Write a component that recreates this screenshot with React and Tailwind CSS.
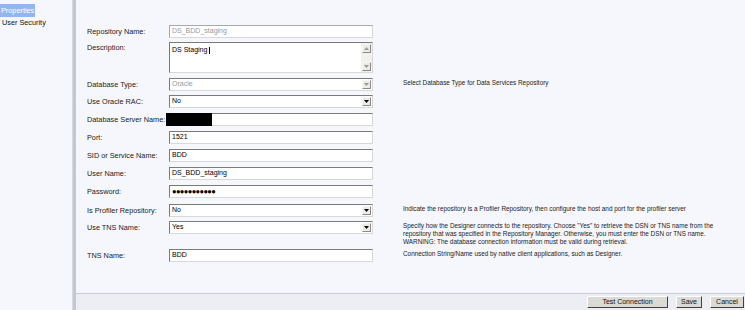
import React from "react";

const font = { fontFamily: '"Liberation Sans", Arial, sans-serif' };

function Box({ children, disabled, className = "" }) {
  return (
    <div
      className={`relative w-[204px] h-[13px] bg-white border border-t-[#7b7b7b] border-l-[#7b7b7b] border-r-[#d8d8d8] border-b-[#d8d8d8] flex items-center pl-[2px] text-[7px] ${disabled ? "text-[#9a9a9a]" : "text-black"} ${className}`}
    >
      {children}
    </div>
  );
}

function Arrow({ up, disabled }) {
  return (
    <div className="w-[9px] h-[9px] bg-[#ecebe6] border border-t-[#f6f6f6] border-l-[#f6f6f6] border-r-[#8a8a8a] border-b-[#8a8a8a] flex items-center justify-center">
      <svg width="5" height="3" viewBox="0 0 5 3">
        <path d={up ? "M0 3 L5 3 L2.5 0 Z" : "M0 0 L5 0 L2.5 3 Z"} fill={disabled ? "#9a9a9a" : "#000"} />
      </svg>
    </div>
  );
}

function Select({ value, disabled }) {
  return (
    <Box disabled={disabled}>
      <span className="flex-1">{value}</span>
      <div className="mr-[1px]">
        <Arrow disabled={disabled} />
      </div>
    </Box>
  );
}

function Row({ label, children, help, mt, labelPt = "pt-[2px]" }) {
  return (
    <div className="flex items-start" style={{ marginTop: mt }}>
      <div className={`w-[82px] shrink-0 text-[7.3px] text-[#222] ${labelPt}`}>{label}</div>
      <div className="shrink-0">{children}</div>
      {help && <div className="ml-[30px] h-[13px] text-[6.4px] leading-[8px] text-[#222] pt-[1px] w-[340px] whitespace-nowrap">{help}</div>}
    </div>
  );
}

export default function App() {
  return (
    <div className="w-[745px] h-[310px] bg-[#f6f7fd] flex overflow-hidden" style={font}>
      <div className="w-[72px] shrink-0 pt-[4px] text-[7.3px]">
        <div className="inline-block bg-[#93b6ee] text-white px-[1px] h-[13px] leading-[13px]">Properties</div>
        <div className="pl-[2px] mt-[1px] text-[#111]">User Security</div>
      </div>
      <div className="w-[4px] shrink-0 bg-[#c3c7cf] border-l border-[#d6d9df]" />
      <div className="flex-1 flex flex-col">
        <div className="flex-1 pl-[11px] pt-[25px]">
          <Row label="Repository Name:" mt={0}>
            <Box disabled className="border-t-[#a9a9a9] border-l-[#a9a9a9]">DS_BDD_staging</Box>
          </Row>
          <Row label="Description:" mt={4} labelPt="pt-[1px]">
            <div className="w-[204px] h-[31px] bg-white border border-t-[#7b7b7b] border-l-[#7b7b7b] border-r-[#d8d8d8] border-b-[#d8d8d8] flex text-[7px]">
              <div className="flex-1 pl-[2px] pt-[2px]">DS Staging <span className="inline-block w-[1px] h-[7px] bg-black align-middle" /></div>
              <div className="w-[11px] bg-[#f2f1ee] flex flex-col justify-between p-[1px]">
                <Arrow up disabled />
                <Arrow disabled />
              </div>
            </div>
          </Row>
          <Row label="Database Type:" mt={5} help="Select Database Type for Data Services Repository">
            <Select value="Oracle" disabled />
          </Row>
          <Row label="Use Oracle RAC:" mt={4}>
            <Select value="No" />
          </Row>
          <Row label="Database Server Name:" mt={5}>
            <div className="relative">
              <Box />
              <div className="absolute left-[-3px] top-0 w-[46px] h-[13px] bg-black" />
            </div>
          </Row>
          <Row label="Port:" mt={5}>
            <Box>1521</Box>
          </Row>
          <Row label="SID or Service Name:" mt={5}>
            <Box>BDD</Box>
          </Row>
          <Row label="User Name:" mt={5}>
            <Box>DS_BDD_staging</Box>
          </Row>
          <Row label="Password:" mt={5}>
            <Box><span className="text-[7.5px] tracking-[-0.6px] font-bold">●●●●●●●●●●●</span></Box>
          </Row>
          <Row label="Is Profiler Repository:" mt={6} help="Indicate the repository is a Profiler Repository, then configure the host and port for the profiler server">
            <Select value="No" />
          </Row>
          <Row
            label="Use TNS Name:"
            mt={4}
            help={
              <>
                <div>Specify how the Designer connects to the repository. Choose "Yes" to retrieve the DSN or TNS name from the</div>
                <div>repository that was specified in the Repository Manager. Otherwise, you must enter the DSN or TNS name.</div>
                <div>WARNING: The database connection information must be valid during retrieval.</div>
              </>
            }
          >
            <Select value="Yes" />
          </Row>
          <Row label="TNS Name:" mt={15} help="Connection String/Name used by native client applications, such as Designer.">
            <Box>BDD</Box>
          </Row>
        </div>
        <div className="h-[17px] shrink-0 border-t border-[#c9ccd3] bg-[#eceef4] flex items-center justify-end gap-[8px] pr-[1px] text-[7px]">
          <button className="w-[81px] h-[12px] bg-[#dcdad4] border border-t-[#fff] border-l-[#fff] border-r-[#404040] border-b-[#404040] text-[#111]">Test Connection</button>
          <button className="w-[26px] h-[12px] bg-[#dcdad4] border border-t-[#fff] border-l-[#fff] border-r-[#404040] border-b-[#404040] text-[#111]">Save</button>
          <button className="w-[34px] h-[12px] bg-[#dcdad4] border border-t-[#fff] border-l-[#fff] border-r-[#404040] border-b-[#404040] text-[#111]">Cancel</button>
        </div>
      </div>
    </div>
  );
}
